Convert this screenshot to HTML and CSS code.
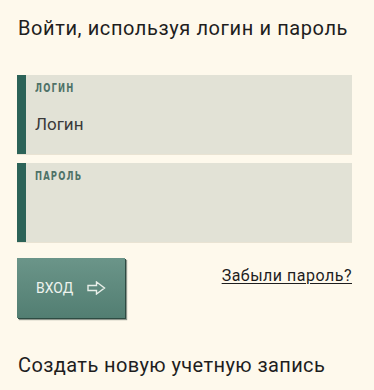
FILE: index.html
```html
<!DOCTYPE html>
<html>
<head>
    <title>Вход</title>
    <meta charset="utf-8" />
    <link rel="stylesheet" href="styles.css">
</head>
<body>
    <div class="container">
        <h2 class="title">Войти, используя логин и пароль</h2>
        <form class="form-login" action="/login" method="post">
            <label class="field">
                <span class="field-label">Логин</span>
                <input type="text" name="login" class="field-input" placeholder="Логин" />
            </label>
            <label class="field">
                <span class="field-label">Пароль</span>
                <input type="password" name="password" class="field-input" />
            </label>
            <div class="form-actions">
                <button type="submit" class="btn-login">
                    Вход
                    <svg class="btn-arrow" width="19" height="14" viewBox="0 0 19 14">
                        <path d="M1 4.5 H9.5 V1 L17.5 7 L9.5 13 V9.5 H1 Z" fill="none" stroke="#e8efe9" stroke-width="1.4" stroke-linejoin="miter" />
                    </svg>
                </button>
                <a href="#" class="forgot-link">Забыли пароль?</a>
            </div>
        </form>
        <h2 class="title title-register">Создать новую учетную запись</h2>
    </div>
</body>
</html>
```

FILE: styles.css
```css
body{
    margin:0;
    background:#fef9ec;
    font-family:Roboto, "Liberation Sans", sans-serif;
    color:#1e1e1e;
}
.container{
    padding:16px 22px 0 17px;
}
.title{
    margin:0 0 0 1px;
    font-size:20px;
    font-weight:400;
    line-height:24px;
    letter-spacing:0.6px;
}
.form-login{
    margin-top:35px;
}
.field{
    display:flex;
    flex-direction:column;
    align-items:flex-start;
    height:79px;
    margin-bottom:9px;
    background:#e2e2d6;
    border-left:9px solid #2c6358;
    box-shadow:0 1px 0 #e9e3d3;
    padding:6px 0 0 9px;
    box-sizing:border-box;
}
.field-label{
    display:inline-block;
    font-family:"DejaVu Sans Condensed", sans-serif;
    font-weight:bold;
    font-size:13px;
    letter-spacing:1.6px;
    text-transform:uppercase;
    color:#4f7268;
    line-height:14px;
    transform:scaleX(0.72);
    transform-origin:left;
}
.field-input{
    width:100%;
    border:0;
    background:transparent;
    font-family:inherit;
    font-size:17px;
    color:#333;
    padding:0;
    margin-top:19px;
    outline:none;
}
.field-input::placeholder{
    color:#3a3a3a;
}
.form-actions{
    display:flex;
    justify-content:space-between;
    align-items:flex-start;
    margin-top:16px;
}
.btn-login{
    display:flex;
    align-items:center;
    gap:14px;
    width:108px;
    height:60px;
    padding:0 0 0 19px;
    border:0;
    background:linear-gradient(#6b9589, #527e72);
    box-shadow:1px 1px 0 #2d4b42, 2px 2px 1px rgba(30,50,44,0.5);
    color:#eef3ee;
    font-family:inherit;
    font-size:14px;
    text-transform:uppercase;
    cursor:pointer;
}
.forgot-link{
    margin-top:8px;
    font-size:16px;
    letter-spacing:0.5px;
    color:#1e1e1e;
    text-decoration:underline;
    text-underline-offset:2px;
}
.title-register{
    margin-top:35px;
    letter-spacing:0.4px;
}
```
